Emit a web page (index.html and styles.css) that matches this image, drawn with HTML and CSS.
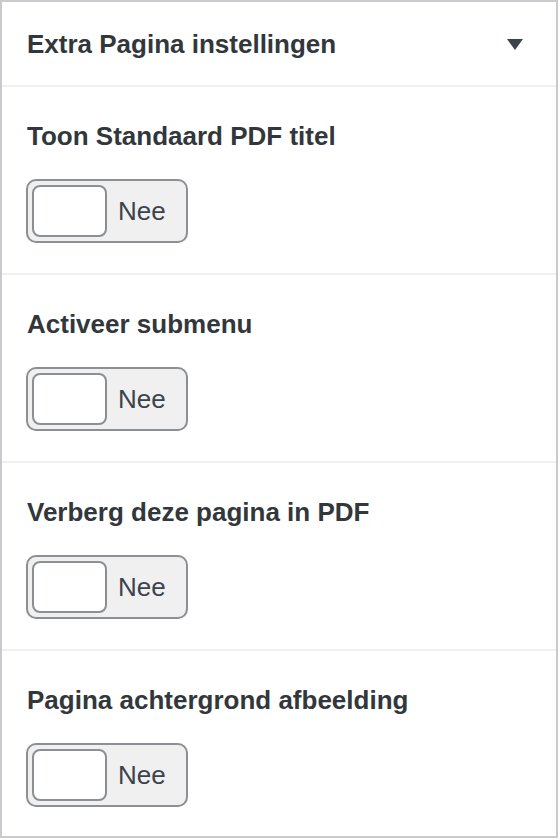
FILE: index.html
```html
<!DOCTYPE html>
<html lang="nl">
<head>
<meta charset="utf-8">
<title>Extra Pagina instellingen</title>
<link rel="stylesheet" href="styles.css">
</head>
<body>
<div class="panel">
  <div class="panel-header">
    <h2 class="panel-title">Extra Pagina instellingen</h2>
    <svg class="caret" width="16" height="11" viewBox="0 0 16 11" aria-hidden="true"><polygon points="0,0 16,0 8,11" fill="#3c434a"/></svg>
  </div>
  <div class="field">
    <div class="field-label">Toon Standaard PDF titel</div>
    <div class="toggle"><span class="knob"></span><span class="toggle-text">Nee</span></div>
  </div>
  <div class="field">
    <div class="field-label">Activeer submenu</div>
    <div class="toggle"><span class="knob"></span><span class="toggle-text">Nee</span></div>
  </div>
  <div class="field">
    <div class="field-label">Verberg deze pagina in PDF</div>
    <div class="toggle"><span class="knob"></span><span class="toggle-text">Nee</span></div>
  </div>
  <div class="field field-last">
    <div class="field-label">Pagina achtergrond afbeelding</div>
    <div class="toggle"><span class="knob"></span><span class="toggle-text">Nee</span></div>
  </div>
</div>
</body>
</html>
```
FILE: styles.css
```css
html, body {
  margin: 0;
  padding: 0;
  background: #ffffff;
}
body {
  font-family: "Liberation Sans", Arial, sans-serif;
  color: #32373c;
}
.panel {
  width: 558px;
  height: 838px;
  box-sizing: border-box;
  border: 2px solid #c8cacd;
  background: #fff;
  display: flex;
  flex-direction: column;
}
.panel-header {
  height: 85px;
  box-sizing: border-box;
  border-bottom: 2px solid #f0f0f1;
  display: flex;
  align-items: center;
  justify-content: space-between;
  padding: 0 33px 0 25px;
}
.panel-title {
  margin: 0;
  font-size: 26px;
  font-weight: 700;
  line-height: 36px;
  color: #32373c;
}
.caret {
  display: block;
  margin-top: 2px;
}
.field {
  height: 188px;
  box-sizing: border-box;
  border-bottom: 2px solid #f0f0f1;
  padding: 31px 25px 0;
  display: flex;
  flex-direction: column;
  align-items: flex-start;
}
.field-last {
  border-bottom: none;
  flex: 1;
}
.field-label {
  font-size: 26px;
  font-weight: 700;
  line-height: 36px;
  color: #32373c;
}
.toggle {
  margin-top: 25px;
  margin-left: -1px;
  display: inline-flex;
  align-items: center;
  gap: 11px;
  height: 64px;
  box-sizing: border-box;
  padding: 4px 20px 4px 4px;
  border: 2px solid #8c8f94;
  border-radius: 10px;
  background: #f0f0f1;
}
.knob {
  display: block;
  width: 75px;
  height: 52px;
  box-sizing: border-box;
  border: 2px solid #8c8f94;
  border-radius: 8px;
  background: #fff;
}
.toggle-text {
  font-size: 26px;
  line-height: 30px;
  color: #3c434a;
}
```
